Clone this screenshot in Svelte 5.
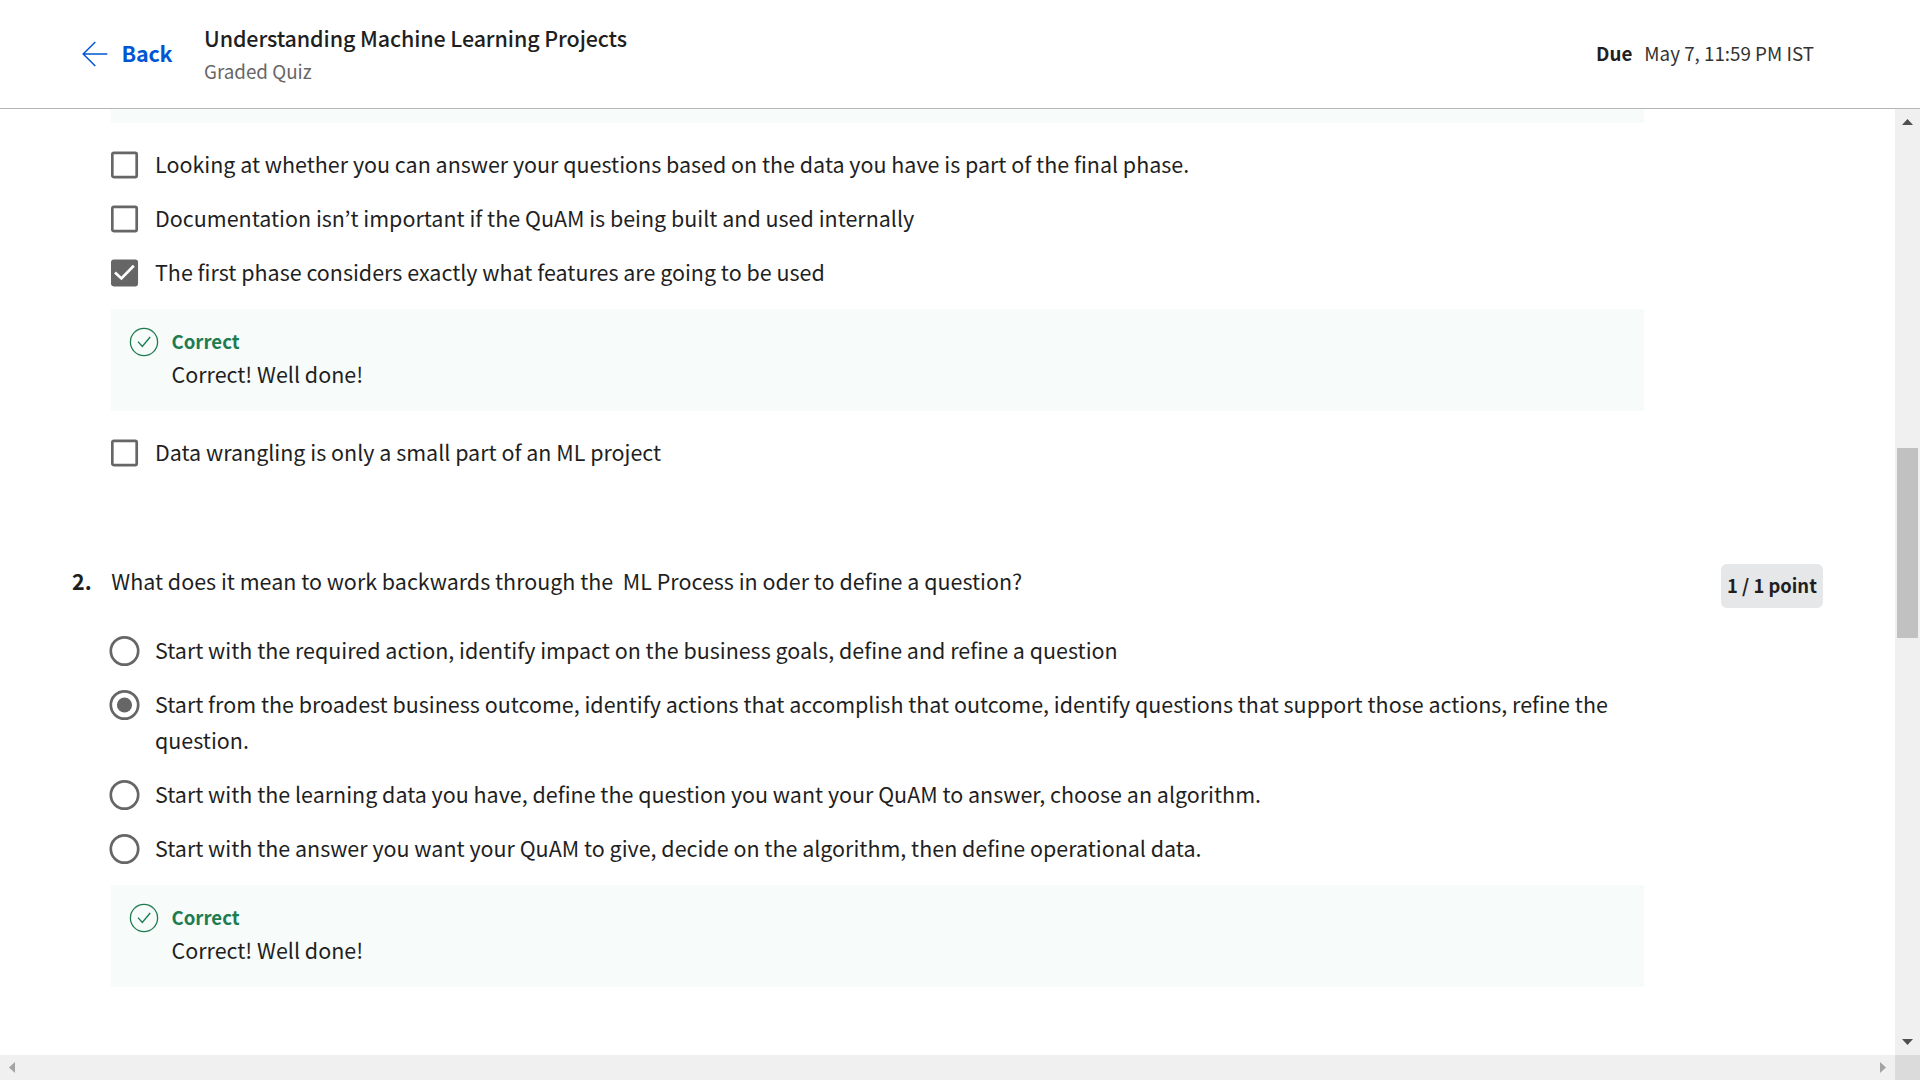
<script lang="ts">
  type Option = { text: string; selected?: boolean };

  const firstOptions: Option[] = [
    { text: 'Looking at whether you can answer your questions based on the data you have is part of the final phase.' },
    { text: 'Documentation isn’t important if the QuAM is being built and used internally' },
    { text: 'The first phase considers exactly what features are going to be used', selected: true }
  ];
  const lastOption: Option = { text: 'Data wrangling is only a small part of an ML project' };
  const secondOptions: Option[] = [
    { text: 'Start with the required action, identify impact on the business goals, define and refine a question' },
    { text: 'Start from the broadest business outcome, identify actions that accomplish that outcome, identify questions that support those actions, refine the question.', selected: true },
    { text: 'Start with the learning data you have, define the question you want your QuAM to answer, choose an algorithm.' },
    { text: 'Start with the answer you want your QuAM to give, decide on the algorithm, then define operational data.' }
  ];
</script>

{#snippet checkbox(option: Option)}
  <label class="option">
    <svg class="control" width="44" height="36" viewBox="0 0 44 36" fill="none">
      <rect x="1.3" y="5.9" width="24.4" height="24.2" rx="1.5" stroke="#666" stroke-width="2.7" fill={option.selected ? '#666' : '#fff'} />
      {#if option.selected}<path d="M4 17.6 10.4 23.4 22.8 10.8" stroke="#fff" stroke-width="2.7" />{/if}
    </svg>
    <span class="text">{option.text}</span>
  </label>
{/snippet}

{#snippet radio(option: Option)}
  <label class="option">
    <svg class="control round" width="46" height="36" viewBox="0 0 46 36">
      <circle cx="15.5" cy="18" r="13.7" fill="#fff" stroke="#666" stroke-width="2.7" />
      {#if option.selected}<circle cx="15.5" cy="18" r="7.6" fill="#666" />{/if}
    </svg>
    <span class="text">{option.text}</span>
  </label>
{/snippet}

{#snippet feedback()}
  <div class="feedback">
    <svg width="30" height="30" viewBox="0 0 30 30" fill="none" stroke="#1d7c50">
      <circle cx="15" cy="15" r="13.6" stroke-width="1.3" />
      <path d="M9 14.6 13.3 19.4 21.2 10" stroke-width="1.4" />
    </svg>
    <div class="copy">
      <div class="verdict">Correct</div>
      <div class="message">Correct! Well done!</div>
    </div>
  </div>
{/snippet}

<div class="page">
  <header>
    <a class="back" href="#back">
      <svg width="26" height="26" viewBox="0 0 26 26" fill="none" stroke="#0056d2" stroke-width="1.5"><path d="M25.3 13H1.2M13.3 1 1.2 13 13.3 25" /></svg>
      <span>Back</span>
    </a>
    <div class="heading">
      <div class="title">Understanding Machine Learning Projects</div>
      <div class="subtitle">Graded Quiz</div>
    </div>
    <div class="due"><b>Due</b><span>May 7, 11:59 PM IST</span></div>
  </header>

  <div class="body">
    <main>
      <div class="cut"></div>
      <section class="options first">
        {#each firstOptions as option}{@render checkbox(option)}{/each}
        {@render feedback()}
      </section>
      <div class="after">{@render checkbox(lastOption)}</div>

      <section class="question">
        <div class="number">2.</div>
        <div class="prompt">What does it mean to work backwards through the&nbsp; ML Process in oder to define a question?</div>
        <div class="points">1 / 1 point</div>
      </section>
      <section class="options second">
        {#each secondOptions as option}{@render radio(option)}{/each}
        {@render feedback()}
      </section>
    </main>

    <div class="vbar">
      <svg class="up" width="11" height="6" viewBox="0 0 11 6"><path d="M0 6 5.5 0 11 6Z" fill="#505050" /></svg>
      <div class="thumb"></div>
      <svg class="down" width="11" height="6" viewBox="0 0 11 6"><path d="M0 0H11L5.5 6Z" fill="#505050" /></svg>
    </div>
    <div class="hbar">
      <svg width="6" height="11" viewBox="0 0 6 11"><path d="M6 0V11L0 5.5Z" fill="#a3a3a3" /></svg>
      <svg width="6" height="11" viewBox="0 0 6 11"><path d="M0 0V11L6 5.5Z" fill="#a3a3a3" /></svg>
    </div>
    <div class="corner"></div>
  </div>
</div>

<style>
  :global(body) {
    margin: 0;
    background: #fff;
  }
  .page {
    width: 1920px;
    height: 1080px;
    display: flex;
    flex-direction: column;
    overflow: hidden;
    background: #fff;
    color: #1f1f1f;
    font-family: 'Noto Sans CJK KR', 'Noto Sans', sans-serif;
    font-size: 21.485px;
    line-height: 36px;
  }
  header {
    box-sizing: border-box;
    height: 109px;
    flex: none;
    display: flex;
    align-items: center;
    padding: 0 106px 0 81.5px;
    border-bottom: 1px solid #b5b5b5;
    white-space: nowrap;
  }
  .back {
    display: flex;
    align-items: center;
    width: 122.5px;
    gap: 14px;
    color: #0056d2;
    font-weight: 700;
    letter-spacing: -0.2px;
    text-decoration: none;
  }
  .back span {
    margin-bottom: 2px;
  }
  .heading {
    flex: 1;
  }
  .title {
    font-weight: 500;
    letter-spacing: -0.1px;
    line-height: 33px;
  }
  .subtitle {
    color: #666;
    font-size: 18.8px;
    line-height: 33px;
  }
  .due {
    display: flex;
    gap: 12px;
    margin-bottom: 2px;
    font-size: 18.8px;
  }
  .due span {
    color: #333;
  }
  .body {
    flex: 1;
    display: grid;
    grid-template-columns: 1895px 25px;
    grid-template-rows: 946px 25px;
  }
  main {
    overflow: hidden;
  }
  .cut {
    width: 1533px;
    height: 14px;
    margin: 0 0 24px 111px;
    background: #f7fbfa;
  }
  .options {
    width: 1533px;
    margin-left: 111px;
    display: flex;
    flex-direction: column;
    gap: 18px;
  }
  .option {
    display: flex;
    align-items: flex-start;
  }
  .control {
    flex: none;
  }
  .round {
    margin-left: -2px;
  }
  .text,
  .prompt {
    margin: -1px 0 1px;
  }
  .feedback {
    box-sizing: border-box;
    height: 102px;
    display: flex;
    gap: 12.5px;
    padding: 18px;
    background: #f7fbfa;
  }
  .feedback svg {
    flex: none;
  }
  .copy {
    margin-top: -1px;
  }
  .verdict {
    color: #1d7c50;
    font-size: 18.6px;
    font-weight: 700;
    line-height: 30px;
  }
  .after {
    margin: 24px 0 93px 111px;
  }
  .question {
    display: flex;
    align-items: flex-start;
    height: 69px;
    padding: 0 72px;
  }
  .number {
    width: 39.3px;
    margin-top: -1px;
    font-weight: 700;
  }
  .prompt {
    flex: 1;
  }
  .points {
    box-sizing: border-box;
    width: 102px;
    height: 44px;
    border-radius: 6px;
    background: #e5e7e8;
    font-size: 18.4px;
    font-weight: 700;
    line-height: 43px;
    text-align: center;
    white-space: nowrap;
  }
  .vbar {
    display: flex;
    flex-direction: column;
    align-items: center;
    background: #f0f0f0;
  }
  .up {
    margin: 10px 0 323px;
    flex: none;
  }
  .thumb {
    width: 21px;
    height: 190px;
    background: #c1c1c1;
  }
  .down {
    margin: auto 0 10px;
    flex: none;
  }
  .hbar {
    display: flex;
    align-items: center;
    justify-content: space-between;
    padding: 0 9px;
    background: #f0f0f0;
  }
  .corner {
    background: #dbdbdb;
  }
</style>
